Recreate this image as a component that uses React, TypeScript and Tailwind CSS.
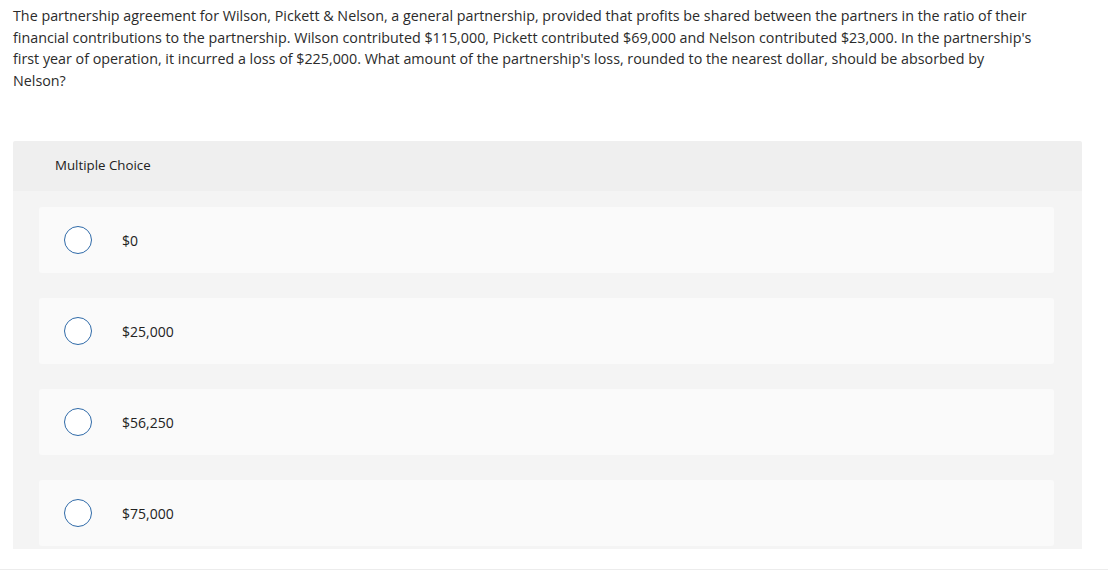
import React from "react";

const options = ["$0", "$25,000", "$56,250", "$75,000"];

export default function App() {
  return (
    <div
      className="w-[1108px] h-[573px] bg-white flex flex-col overflow-hidden text-[#2b2b2b]"
      style={{ fontFamily: "'Open Sans', Arial, sans-serif" }}
    >
      <p className="pl-[13px] pt-[5px] w-[1035px] h-[91px] text-[14.3px] leading-[21.5px]">
        The partnership agreement for Wilson, Pickett &amp; Nelson, a general partnership, provided that profits be shared between the partners in the ratio of their financial contributions to the partnership. Wilson contributed $115,000, Pickett contributed $69,000 and Nelson contributed $23,000. In the partnership's first year of operation, it incurred a loss of $225,000. What amount of the partnership's loss, rounded to the nearest dollar, should be absorbed by Nelson?
      </p>
      <section className="mt-[50px] ml-[13px] w-[1069px]">
        <div className="h-[50px] bg-[#efefef] rounded-t-[2px] pl-[42px] flex items-center text-[13.3px] text-[#222]">
          Multiple Choice
        </div>
        <div className="bg-[#f4f4f4] pt-[16px] pb-[3px] pl-[26px] pr-[28px] flex flex-col gap-[25px]">
          {options.map((o) => (
            <label
              key={o}
              className="h-[66px] bg-[#fafafa] rounded-[3px] flex items-center pl-[25px]"
            >
              <span className="w-[28px] h-[28px] rounded-full border border-[#2f6aa8] bg-white shrink-0" />
              <span className="ml-[30px] text-[14px] text-[#222]">{o}</span>
            </label>
          ))}
        </div>
      </section>
      <div className="mt-[20px] border-t border-[#ececec] h-[4px]" />
    </div>
  );
}
